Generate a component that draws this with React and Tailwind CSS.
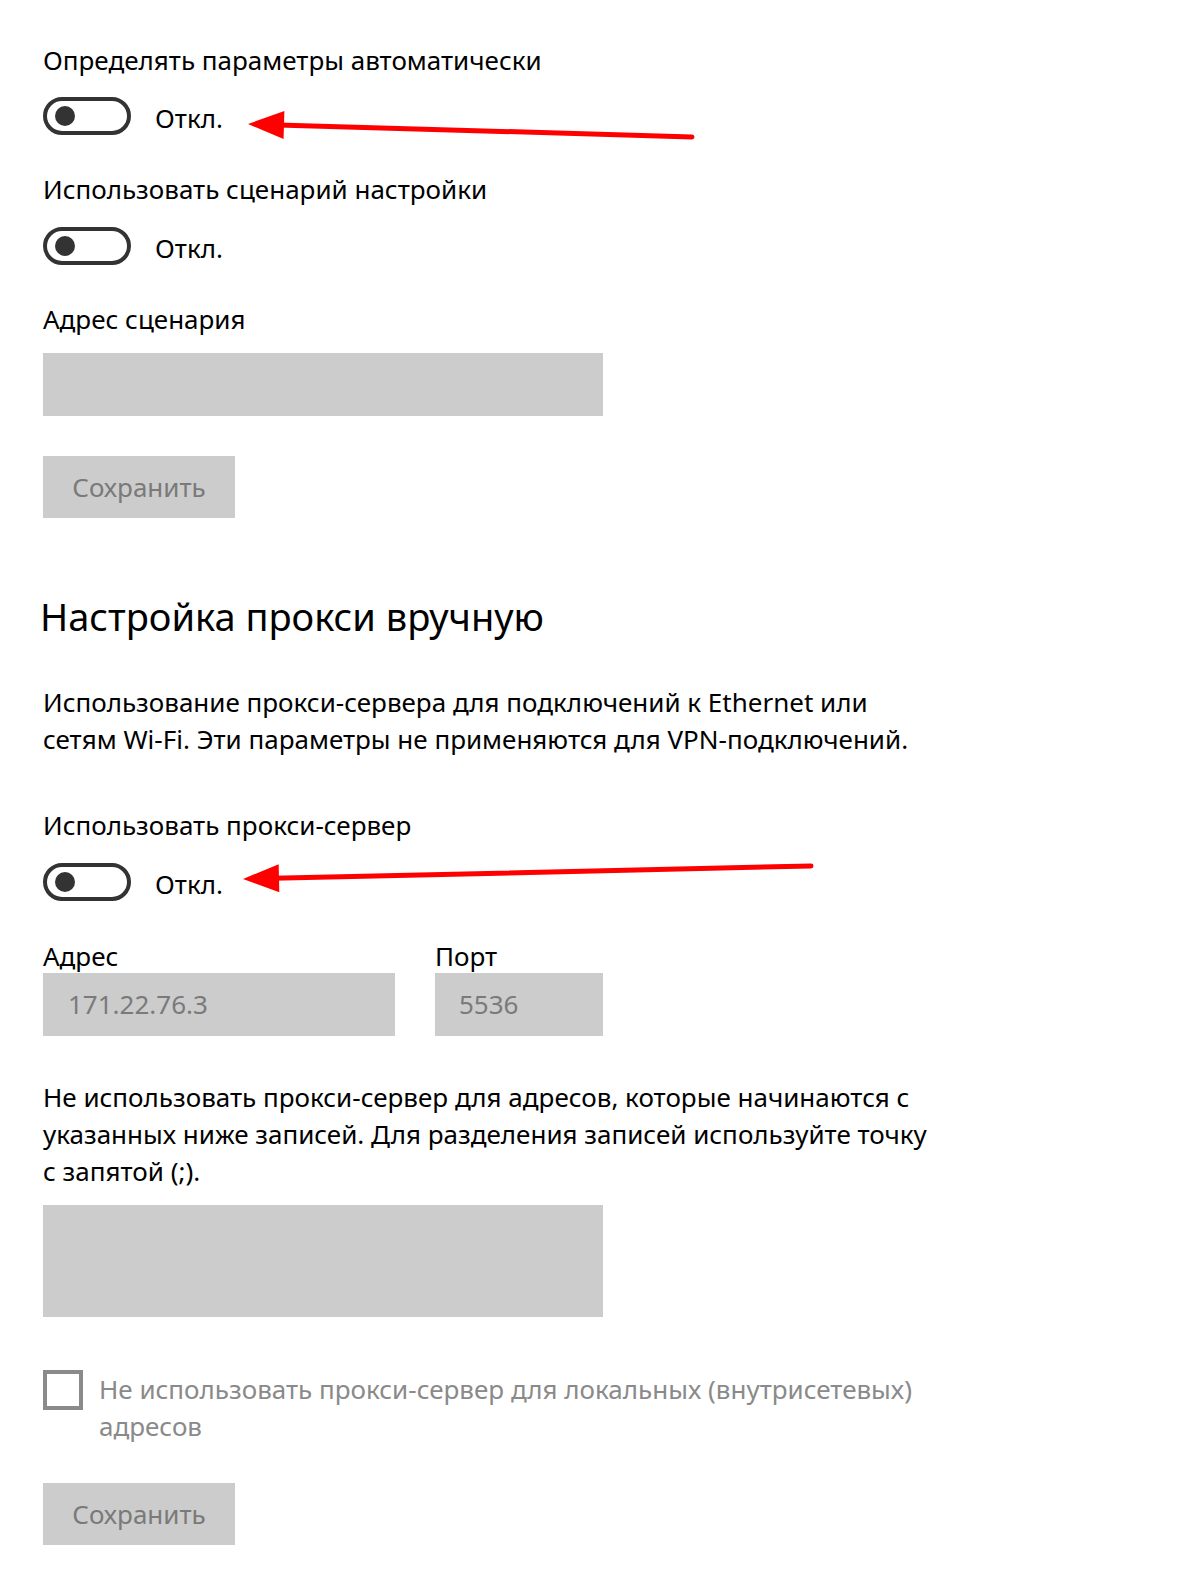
import React from 'react';

const font = { fontFamily: '"Noto Sans", "Open Sans", sans-serif' };

function Toggle({ label = 'Откл.' }) {
  return (
    <div className="flex items-center h-[38px]">
      <div className="w-[88px] h-[38px] rounded-full border-[4px] border-[#333333] flex items-center pl-[8px]">
        <div className="w-[20px] h-[20px] rounded-full bg-[#333333]" />
      </div>
      <span className="ml-[24px] pt-[4px] text-[26px] text-black leading-none">{label}</span>
    </div>
  );
}

function SaveButton() {
  return (
    <div className="w-[192px] h-[62px] bg-[#cccccc] flex items-center justify-center text-[26px] text-[#7a7a7a]">
      Сохранить
    </div>
  );
}

function Arrow({ x1, y1, x2, y2 }) {
  const ang = Math.atan2(y2 - y1, x2 - x1);
  const len = 36;
  const w = 14;
  const bx = x2 - Math.cos(ang) * len;
  const by = y2 - Math.sin(ang) * len;
  const px = -Math.sin(ang) * w;
  const py = Math.cos(ang) * w;
  return (
    <g>
      <line x1={x1} y1={y1} x2={bx + Math.cos(ang) * 6} y2={by + Math.sin(ang) * 6} stroke="#ff0000" strokeWidth="5" strokeLinecap="round" />
      <polygon points={`${x2},${y2} ${bx + px},${by + py} ${bx - px},${by - py}`} fill="#ff0000" />
    </g>
  );
}

export default function App() {
  return (
    <div className="relative w-[1198px] h-[1569px] bg-white overflow-hidden" style={font}>
      <div className="pl-[43px] pt-[42px] text-[26px] text-black">
        <div className="leading-[36px]">Определять параметры автоматически</div>
        <div className="mt-[19px]"><Toggle /></div>

        <div className="mt-[36px] leading-[36px]">Использовать сценарий настройки</div>
        <div className="mt-[20px]"><Toggle /></div>

        <div className="mt-[36px] leading-[36px]">Адрес сценария</div>
        <div className="mt-[16px] w-[560px] h-[63px] bg-[#cccccc]" />
        <div className="mt-[40px]"><SaveButton /></div>

        <h2 className="mt-[70px] -ml-[3px] text-[38px] leading-[56px] font-normal">Настройка прокси вручную</h2>

        <p className="mt-[40px] leading-[37px] w-[920px]">
          Использование прокси-сервера для подключений к Ethernet или<br />
          сетям Wi-Fi. Эти параметры не применяются для VPN-подключений.
        </p>

        <div className="mt-[49px] leading-[36px]">Использовать прокси-сервер</div>
        <div className="mt-[20px]"><Toggle /></div>

        <div className="mt-[37px] flex gap-[40px]">
          <div className="flex flex-col">
            <div className="leading-[36px] h-[35px]">Адрес</div>
            <div className="w-[352px] h-[63px] bg-[#cccccc] flex items-center pl-[25px] text-[#7a7a7a]">171.22.76.3</div>
          </div>
          <div className="flex flex-col">
            <div className="leading-[36px] h-[35px]">Порт</div>
            <div className="w-[168px] h-[63px] bg-[#cccccc] flex items-center pl-[24px] text-[#7a7a7a]">5536</div>
          </div>
        </div>

        <p className="mt-[43px] leading-[37px] w-[920px]">
          Не использовать прокси-сервер для адресов, которые начинаются с<br />
          указанных ниже записей. Для разделения записей используйте точку<br />
          с запятой (;).
        </p>
        <div className="mt-[15px] w-[560px] h-[112px] bg-[#cccccc]" />

        <div className="mt-[53px] flex items-start">
          <div className="w-[40px] h-[40px] border-[4px] border-[#8a8a8a] shrink-0" />
          <div className="ml-[16px] mt-[1px] leading-[37px] text-[#8a8a8a]">
            Не использовать прокси-сервер для локальных (внутрисетевых)<br />
            адресов
          </div>
        </div>

        <div className="mt-[38px]"><SaveButton /></div>
      </div>

      <svg className="absolute left-0 top-0 pointer-events-none" width="1198" height="1569">
        <Arrow x1={692} y1={137} x2={248} y2={124} />
        <Arrow x1={811} y1={866} x2={243} y2={879} />
      </svg>
    </div>
  );
}
